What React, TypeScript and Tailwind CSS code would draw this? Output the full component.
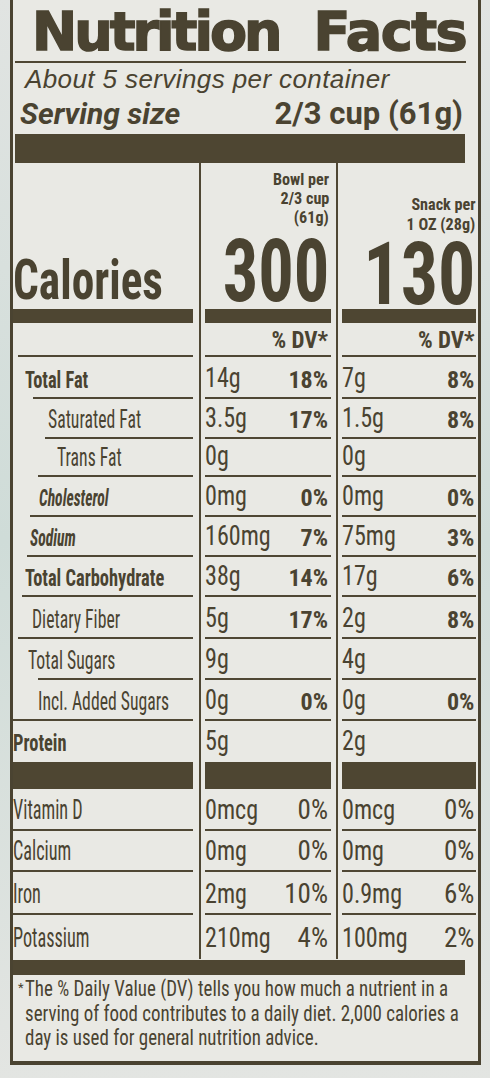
type Row = {
  label: string;
  kind: "b" | "bi" | "r" | "rv";
  pl: string;
  h: string;
  ml: string;
  line: boolean;
  v1: string;
  p1: string;
  v2: string;
  p2: string;
};

const rows1: Row[] = [
  { label: "Total Fat", kind: "b", pl: "pl-[12px]", h: "h-[42px]", ml: "ml-[20px]", line: true, v1: "14g", p1: "18%", v2: "7g", p2: "8%" },
  { label: "Saturated Fat", kind: "r", pl: "pl-[35px]", h: "h-[40px]", ml: "ml-[32px]", line: true, v1: "3.5g", p1: "17%", v2: "1.5g", p2: "8%" },
  { label: "Trans Fat", kind: "r", pl: "pl-[44px]", h: "h-[38px]", ml: "ml-[25px]", line: true, v1: "0g", p1: "", v2: "0g", p2: "" },
  { label: "Cholesterol", kind: "bi", pl: "pl-[26px]", h: "h-[40px]", ml: "ml-[17px]", line: true, v1: "0mg", p1: "0%", v2: "0mg", p2: "0%" },
  { label: "Sodium", kind: "bi", pl: "pl-[17px]", h: "h-[40px]", ml: "ml-[14px]", line: true, v1: "160mg", p1: "7%", v2: "75mg", p2: "3%" },
  { label: "Total Carbohydrate", kind: "b", pl: "pl-[12px]", h: "h-[40px]", ml: "ml-[9px]", line: true, v1: "38g", p1: "14%", v2: "17g", p2: "6%" },
  { label: "Dietary Fiber", kind: "r", pl: "pl-[19px]", h: "h-[42px]", ml: "ml-[5px]", line: true, v1: "5g", p1: "17%", v2: "2g", p2: "8%" },
  { label: "Total Sugars", kind: "r", pl: "pl-[15px]", h: "h-[41px]", ml: "ml-[25px]", line: true, v1: "9g", p1: "", v2: "4g", p2: "" },
  { label: "Incl. Added Sugars", kind: "r", pl: "pl-[25px]", h: "h-[41px]", ml: "ml-[0px]", line: true, v1: "0g", p1: "0%", v2: "0g", p2: "0%" },
  { label: "Protein", kind: "b", pl: "pl-[0px]", h: "h-[41px]", ml: "ml-[0px]", line: false, v1: "5g", p1: "", v2: "2g", p2: "" },
];

const rows2: Row[] = [
  { label: "Vitamin D", kind: "rv", pl: "pl-[0px]", h: "h-[42px]", ml: "ml-[0px]", line: true, v1: "0mcg", p1: "0%", v2: "0mcg", p2: "0%" },
  { label: "Calcium", kind: "rv", pl: "pl-[0px]", h: "h-[41px]", ml: "ml-[0px]", line: true, v1: "0mg", p1: "0%", v2: "0mg", p2: "0%" },
  { label: "Iron", kind: "rv", pl: "pl-[0px]", h: "h-[43px]", ml: "ml-[0px]", line: true, v1: "2mg", p1: "10%", v2: "0.9mg", p2: "6%" },
  { label: "Potassium", kind: "rv", pl: "pl-[0px]", h: "h-[44px]", ml: "ml-[0px]", line: false, v1: "210mg", p1: "4%", v2: "100mg", p2: "2%" },
];

const labelCls = {
  b: "inline-block origin-left scale-x-[0.8] whitespace-nowrap text-[23px] leading-none font-bold",
  bi: "inline-block origin-left scale-x-[0.68] whitespace-nowrap text-[23px] leading-none font-bold italic",
  r: "inline-block origin-left scale-x-[0.68] whitespace-nowrap text-[26px] leading-none",
  rv: "inline-block origin-left scale-x-[0.65] whitespace-nowrap text-[28px] leading-none",
};

const valueCls = "inline-block origin-left scale-x-[0.86] whitespace-nowrap text-[28px] leading-none";

const LINE = "bg-[#4f4734]";
const BAR = "bg-[#4e4632]";

function LeftCell({ r }: { r: Row }) {
  return (
    <div className={`${r.h} flex flex-col`}>
      <div className={`flex-1 flex items-end pb-[5px] ${r.pl}`}>
        <span className={labelCls[r.kind]}>{r.label}</span>
      </div>
      {r.line ? <div className={`h-[2px] ${LINE} ${r.ml}`} /> : <div className="h-[2px]" />}
    </div>
  );
}

function ValueCell({ r, v, p, bold, pr }: { r: Row; v: string; p: string; bold: boolean; pr: string }) {
  return (
    <div className={`${r.h} flex flex-col`}>
      <div className={`flex-1 flex items-end justify-between pb-[5px] ${pr}`}>
        <span className={valueCls}>{v}</span>
        {p ? (
          <span className={bold ? "text-[24px] leading-none font-bold" : "text-[27px] leading-none"}>{p}</span>
        ) : null}
      </div>
      {r.line ? <div className={`h-[2px] ${LINE}`} /> : <div className="h-[2px]" />}
    </div>
  );
}

function DataColumn({ which }: { which: 1 | 2 }) {
  const pr = which === 1 ? "pr-[3px]" : "pr-[2px]";
  return (
    <>
      <div className={`h-[14px] ${BAR}`} />
      <div className="h-[34px] flex flex-col">
        <div className={`flex-1 flex items-end justify-end pb-[3px] ${pr}`}>
          <span className="text-[23px] leading-none font-bold">% DV*</span>
        </div>
        <div className={`h-[2px] ${LINE}`} />
      </div>
      {rows1.map((r) => (
        <ValueCell key={r.label} r={r} v={which === 1 ? r.v1 : r.v2} p={which === 1 ? r.p1 : r.p2} bold pr={pr} />
      ))}
      <div className={`h-[27px] ${BAR}`} />
      {rows2.map((r) => (
        <ValueCell key={r.label} r={r} v={which === 1 ? r.v1 : r.v2} p={which === 1 ? r.p1 : r.p2} bold={false} pr={pr} />
      ))}
    </>
  );
}

export default function App() {
  return (
    <div className="w-[490px] h-[1078px] overflow-hidden bg-linear-to-b from-[#e1e4e2] via-[#cfdcd8] to-[#e3e5e2] font-['Roboto_Condensed','Roboto',sans-serif] text-[#4a4331]">
      <div className="ml-[10px] w-[471px] h-[1065px] border-l-[3px] border-r-[3px] border-b-[4px] border-[#4a4331] bg-[#e9e9e4] pr-[12px] flex flex-col">
        {/* Title */}
        <div className="h-[61px] pl-[19px] pt-[5px] flex font-['DejaVu_Sans',sans-serif] font-bold text-[54px] leading-none whitespace-nowrap [-webkit-text-stroke:1.5px_#4a4331]">
          <span className="tracking-[-3px]">Nutrition</span>
          <span className="ml-[34px] tracking-[-1.5px]">Facts</span>
        </div>
        <div className={`h-[2px] ml-[2px] ${LINE}`} />
        {/* Servings */}
        <div className="mt-[2px] pl-[12px] h-[28px] font-['Liberation_Sans',sans-serif] italic text-[26px] leading-[28px] tracking-[0.4px] whitespace-nowrap">
          About 5 servings per container
        </div>
        <div className="mt-[5px] h-[32px] pl-[7px] pr-[3px] flex justify-between items-end font-['Roboto',sans-serif] font-bold leading-[32px] whitespace-nowrap">
          <span className="italic text-[30px]">Serving size</span>
          <span className="text-[31px]">2/3 cup (61g)</span>
        </div>
        <div className={`mt-[4px] h-[29px] ml-[2px] mr-[1px] ${BAR}`} />

        {/* Columns */}
        <div className="flex">
          {/* Left column */}
          <div className="w-[186px] pr-[6px] flex flex-col">
            <div className="h-[146px] flex flex-col justify-end pb-[1px]">
              <span className="inline-block origin-left scale-x-[0.81] whitespace-nowrap text-[56px] leading-none font-bold">
                Calories
              </span>
            </div>
            <div className={`h-[14px] ${BAR}`} />
            <div className="h-[34px] flex flex-col">
              <div className="flex-1" />
              <div className={`h-[2px] ml-[5px] ${LINE}`} />
            </div>
            {rows1.map((r) => (
              <LeftCell key={r.label} r={r} />
            ))}
            <div className={`h-[27px] ${BAR}`} />
            {rows2.map((r) => (
              <LeftCell key={r.label} r={r} />
            ))}
          </div>

          {/* Middle column */}
          <div className="w-[137px] border-l-2 border-[#4f4734] pl-[4px] pr-[5px] flex flex-col">
            <div className="h-[146px] flex flex-col justify-end items-end pr-[2px]">
              <div className="flex flex-col items-end text-[17px] leading-[19px] font-bold mb-[6px]">
                <span className="inline-block origin-right scale-x-[0.95] whitespace-nowrap">Bowl per</span>
                <span className="inline-block origin-right scale-x-[0.95] whitespace-nowrap">2/3 cup</span>
                <span className="inline-block origin-right scale-x-[0.95] whitespace-nowrap">(61g)</span>
              </div>
              <span className="inline-block origin-right scale-x-[0.8] text-[88px] leading-[76px] font-bold">300</span>
            </div>
            <DataColumn which={1} />
          </div>

          {/* Right column */}
          <div className="flex-1 border-l-2 border-[#4f4734] pl-[4px] flex flex-col">
            <div className="h-[146px] flex flex-col justify-end items-end pr-[1px]">
              <div className="flex flex-col items-end text-[17px] leading-[20px] font-bold mb-[5px]">
                <span className="inline-block origin-right scale-x-[0.95] whitespace-nowrap">Snack per</span>
                <span className="inline-block origin-right scale-x-[0.95] whitespace-nowrap">1 OZ (28g)</span>
              </div>
              <span className="inline-block origin-right scale-x-[0.84] text-[88px] leading-[70px] font-bold">130</span>
            </div>
            <DataColumn which={2} />
          </div>
        </div>

        {/* Bottom bar */}
        <div className={`mt-[1px] h-[15px] mr-[1px] ${BAR}`} />

        {/* Footnote */}
        <div className="mt-[2px] pl-[5px] flex">
          <span className="text-[13px] leading-none mt-[4px] mr-[1px]">*</span>
          <div className="flex flex-col text-[22px] leading-[24.5px] whitespace-nowrap">
            <span className="inline-block origin-left scale-x-[0.86]">The % Daily Value (DV) tells you how much a nutrient in a</span>
            <span className="inline-block origin-left scale-x-[0.86]">serving of food contributes to a daily diet. 2,000 calories a</span>
            <span className="inline-block origin-left scale-x-[0.86]">day is used for general nutrition advice.</span>
          </div>
        </div>
      </div>
    </div>
  );
}
